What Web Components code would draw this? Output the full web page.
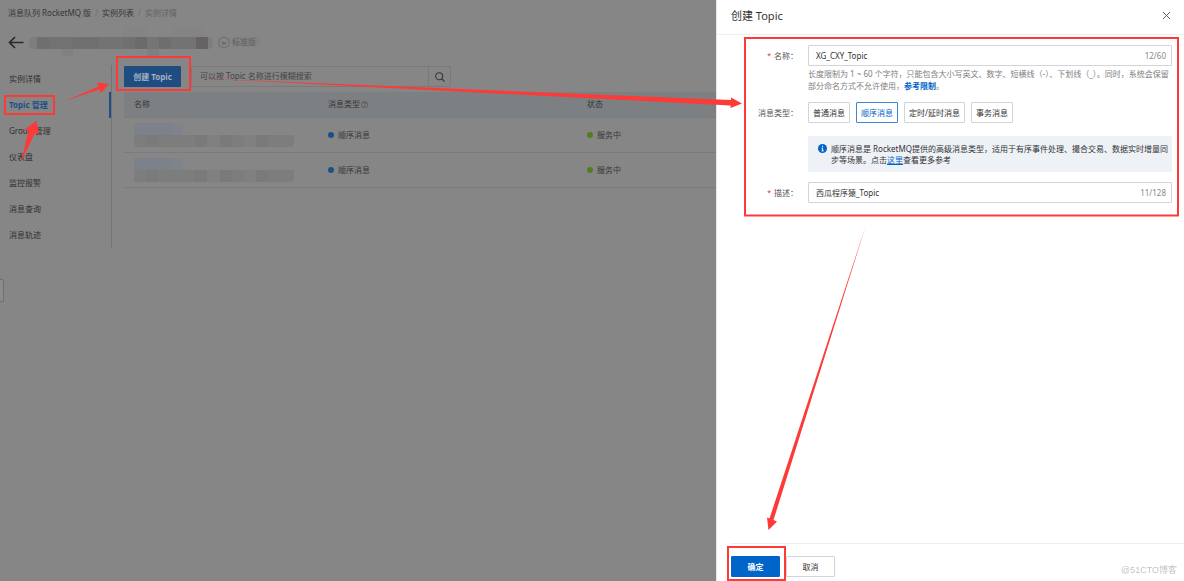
<!DOCTYPE html>
<html lang="zh-CN">
<head>
<meta charset="utf-8">
<title>创建 Topic</title>
<style>
html, body { margin: 0; height: 100%; }
body {
  --page: #868686; --line: #7b7b7b; --accent: #1f4f88;
  --blue: #0064c8; --text: #333;
  background: var(--page); color: #363636; overflow: hidden;
  font: 8px/12px "Noto Sans", "Noto Sans CJK SC", sans-serif;
}
</style>
</head>
<body>
<mq-console></mq-console>
<topic-drawer heading="创建 Topic"></topic-drawer>
<guide-marks></guide-marks>

<script>
const define = (name, html, setup) => {
  const template = document.createElement('template');
  template.innerHTML = html;
  customElements.define(name, class extends HTMLElement {
    constructor() {
      super();
      this.attachShadow({ mode: 'open' }).append(template.content.cloneNode(true));
    }
    connectedCallback() { if (setup) setup(this, this.shadowRoot); }
  });
};

define('crumb-trail', `
<style>
:host { display: block; }
nav { display: flex; gap: 4px; }
a { color: inherit; text-decoration: none; }
i { font-style: normal; color: #6e6e6e; }
span { color: #636363; }
</style>
<nav aria-label="breadcrumb"><a href="#">消息队列 RocketMQ 版</a><i>/</i><a href="#">实例列表</a><i>/</i><span>实例详情</span></nav>`);

define('instance-title', `
<style>
:host { display: flex; align-items: center; gap: 5px; height: 32px; }
button { border: 0; padding: 0; background: none; width: 16px; height: 16px; color: #2a2a2a; }
svg { display: block; }
.edition { display: flex; align-items: center; gap: 1px; color: #606060; }
.edition b { font-weight: 400; background: #828282; border-radius: 5px; padding: 0 4px 0 1px; line-height: 10px; }
</style>
<button aria-label="返回"><svg width="16" height="16" viewBox="0 0 16 16" fill="none" stroke="currentColor" stroke-width="1.7"><path d="M15.500 8.500H1.500M7 3 1.500 8.500 7 14"/></svg></button>
<svg class="mask" width="184" height="32" viewBox="0 0 184 32" aria-hidden="true">
<rect x="94" y="0" width="24" height="11" fill="#848484"/><rect x="142" y="0" width="34" height="11" fill="#848484"/>
<rect x="32" y="22" width="12" height="8" fill="#818181"/><rect x="118" y="22" width="12" height="8" fill="#7f7f7f"/>
<rect x="0" y="11" width="184" height="12" rx="5" fill="#7d7d7d"/>
<rect x="8" y="11" width="12" height="12" fill="#6f6f6f"/><rect x="20" y="11" width="24" height="12" fill="#727272"/>
<rect x="44" y="11" width="26" height="12" fill="#707070"/><rect x="70" y="11" width="24" height="12" fill="#737373"/>
<rect x="94" y="11" width="12" height="12" fill="#707070"/><rect x="106" y="11" width="12" height="12" fill="#6b6b6b"/>
<rect x="118" y="11" width="12" height="12" fill="#757575"/><rect x="130" y="11" width="12" height="12" fill="#6e6e6e"/>
<rect x="142" y="11" width="25" height="12" fill="#737373"/><rect x="167" y="11" width="12" height="12" fill="#676365"/>
</svg>
<div class="edition"><svg width="12" height="13" viewBox="0 0 12 13" fill="none" stroke="#6c6c6c"><path d="M6 .8 11 3.5v6L6 12.2 1 9.500v-6z"/><path d="M4 4.500v3L6 9l2-1.500v-2L6 7z" fill="#666" stroke="none"/></svg><b>标准版</b></div>`);

define('side-nav', `
<style>
:host { display: block; border-right: 1px solid #737373; padding-top: 1px; }
ul { list-style: none; margin: 0; padding: 0; }
a { display: block; line-height: 26px; padding-left: 9px; color: #303030; text-decoration: none; }
a[aria-current] { color: var(--accent); font-weight: 700; border-right: 2px solid var(--accent); }
</style>
<nav><ul>
<li><a href="#">实例详情</a></li>
<li><a href="#" aria-current="page">Topic 管理</a></li>
<li><a href="#">Group 管理</a></li>
<li><a href="#">仪表盘</a></li>
<li><a href="#">监控报警</a></li>
<li><a href="#">消息查询</a></li>
<li><a href="#">消息轨迹</a></li>
</ul></nav>`);

define('topic-toolbar', `
<style>
:host { display: flex; gap: 10px; height: 21px; }
button, input { font: inherit; margin: 0; box-sizing: border-box; }
.create { width: 57px; border: 0; border-radius: 1px; background: #1f4d82; color: #a4b0be; font-weight: 700; padding: 0; }
form { display: flex; }
input { width: 238px; border: 1px solid #7a7a7a; background: none; padding: 0 8px 2px; color: #404040; outline: 0; }
input::placeholder { color: #454545; opacity: 1; }
.go { width: 22px; border: 1px solid #7a7a7a; border-left: 0; background: none; padding: 0; display: grid; place-items: center; }
</style>
<button class="create">创建 Topic</button>
<form role="search"><input aria-label="搜索 Topic" placeholder="可以按 Topic 名称进行模糊搜索"><button class="go" type="button" aria-label="搜索"><svg width="10" height="10" viewBox="0 0 10 10" fill="none" stroke="#383838" stroke-width="1.100"><circle cx="4.200" cy="4.200" r="3.500"/><path d="m6.800 6.800 2.700 2.700"/></svg></button></form>`);

define('status-dot', `
<style>
:host { display: flex; align-items: center; gap: 4px; }
:host::before { content: ""; width: 6px; height: 6px; border-radius: 50%; background: var(--dot); }
</style><slot></slot>`);

define('masked-name', `
<style>:host, svg { display: block; }</style>
<svg width="160" height="24" viewBox="0 0 160 24" aria-hidden="true">
<rect width="49" height="12" fill="#7d8189"/><rect x="37" width="12" height="12" fill="#7f838a"/>
<path d="M0 12h160v8q0 4-5 4H0z" fill="#7d7d7d"/>
<path d="M12 12h12v12H12zM61 12h12v12H61zM86 12h12v12H86zM122 12h12v12h-12z" fill="#7a7a7a"/>
<path d="M73 12h13v12H73zM110 12h12v12h-12z" fill="#808080"/>
</svg>`);

define('topic-table', `
<style>
:host { display: block; }
table { width: 100%; border-collapse: collapse; table-layout: fixed; }
th, td { padding: 0 10px; text-align: left; font-weight: 400; border-bottom: 1px solid var(--line); box-sizing: border-box; }
th { background: #7d8083; height: 25px; }
td { height: 35px; }
col.name { width: 194px; } col.kind { width: 259px; }
th span { display: flex; align-items: center; gap: 1px; }
</style>
<table>
<colgroup><col class="name"><col class="kind"><col></colgroup>
<thead><tr><th>名称</th><th><span>消息类型<svg width="7" height="7" viewBox="0 0 7 7" fill="none" stroke="#484848" stroke-width=".6"><circle cx="3.500" cy="3.500" r="3.100"/><path d="M2.400 2.800q0-1.200 1.100-1.200t1.100 1q0 .6-1.100 1.200v.5M3.500 4.800v.7"/></svg></span></th><th>状态</th></tr></thead>
<tbody>
<tr><td><masked-name></masked-name></td><td><status-dot style="--dot:#1b5187">顺序消息</status-dot></td><td><status-dot style="--dot:#527d26">服务中</status-dot></td></tr>
<tr><td><masked-name></masked-name></td><td><status-dot style="--dot:#1b5187">顺序消息</status-dot></td><td><status-dot style="--dot:#527d26">服务中</status-dot></td></tr>
</tbody>
</table>`);

define('mq-console', `
<style>
:host { display: block; position: relative; height: 100%; }
header { padding: 7px 8px 0; }
instance-title { margin: 7px 0 0; }
.body { display: grid; grid-template-columns: 112px minmax(0, 1fr); align-items: start; padding: 7px 0 0; }
section { padding: 1px 8px 0 12px; display: grid; gap: 5px; }
.handle { position: absolute; left: -1px; top: 279px; width: 5px; height: 23px; box-sizing: border-box; border: 1px solid #707070; border-radius: 0 2px 2px 0; background: #8b8b8b; padding: 0; }
</style>
<header><crumb-trail></crumb-trail><instance-title></instance-title></header>
<div class="body"><side-nav></side-nav><section><topic-toolbar></topic-toolbar><topic-table></topic-table></section></div>
<button class="handle" aria-label="展开侧栏"></button>`);

define('form-row', `
<style>
:host { display: grid; grid-template-columns: 81px minmax(0, 1fr); column-gap: 10px; align-items: start; }
.label { display: flex; justify-content: flex-end; gap: 3px; line-height: 21px; color: #555; }
:host([required]) .label::before { content: "*"; color: #d93026; font-size: 7px; }
</style>
<div class="label"><slot name="label"></slot></div><div><slot></slot></div>`);

define('counted-field', `
<style>
:host { display: flex; align-items: center; height: 21px; box-sizing: border-box; border: 1px solid #cfd4dd; border-radius: 1px; padding: 0 5px 0 7px; background: #fff; }
span { color: #888; }
::slotted(input) { flex: 1; min-width: 0; border: 0; outline: 0; padding: 0; margin: 0; font: inherit; color: #333; background: none; }
</style><slot></slot><span></span>`, (el, root) => {
  root.querySelector('span').textContent = el.getAttribute('count');
});

define('info-note', `
<style>
:host { display: grid; grid-template-columns: 9px minmax(0, 1fr); gap: 4px; background: #eef2f7; padding: 7px 2px 7px 10px; line-height: 11px; color: #333; border-radius: 1px; }
svg { margin-top: 1px; }
p { margin: 0; }
</style>
<svg width="9" height="9" viewBox="0 0 9 9"><circle cx="4.500" cy="4.500" r="4.500" fill="#0064c8"/><path d="M4.500 1.700v1.200M3.600 4h1v2.700M3.500 6.900h2.200" stroke="#fff" fill="none"/></svg>
<p><slot></slot></p>`);

define('topic-drawer', `
<style>
:host { position: fixed; inset: 0 0 0 auto; width: 468px; box-sizing: border-box; background: #fff; color: var(--text); display: flex; flex-direction: column; border-left: 1px solid #e6e6e6; }
header { display: flex; align-items: center; justify-content: space-between; height: 35px; box-sizing: border-box; padding: 0 13px 3px 14px; border-bottom: 1px solid #eee; }
h2 { margin: 0; font-size: 11px; line-height: 16px; font-weight: 400; }
button { font: inherit; margin: 0; padding: 0; box-sizing: border-box; height: 21px; border: 1px solid #cfd4dd; border-radius: 1px; background: #fff; color: #333; }
.close { border: 0; width: 9px; height: 9px; }
.close svg { display: block; }
a { color: var(--blue); text-decoration: none; }
form { flex: 1; padding: 10px 12px 0 0; }
.help { margin: 2px 0 10px; color: #808080; line-height: 12px; }
.help a { font-weight: 700; }
.kinds { display: flex; gap: 6px; }
.kinds button { padding: 0 4px; }
.kinds [aria-pressed=true] { border-color: #3b87d8; color: var(--blue); }
info-note { margin: 13px 0 10px; }
footer { margin-left: 14px; border-top: 1px solid #eee; padding: 12px 0 4px; display: flex; gap: 6px; }
footer button { width: 49px; }
.ok { background: var(--blue); border-color: var(--blue); color: #fff; font-weight: 700; }
</style>
<header><h2></h2><button class="close" aria-label="关闭"><svg width="9" height="9" viewBox="0 0 9 9" stroke="#555" stroke-width=".9"><path d="m1 1 7 7M8 1 1 8"/></svg></button></header>
<form id="topic">
<form-row required><label slot="label" for="name">名称：</label>
<counted-field count="12/60"><input id="name" value="XG_CXY_Topic"></counted-field>
<p class="help">长度限制为 1 ~ 60 个字符，只能包含大小写英文、数字、短横线（-）、下划线（_）。同时，系统会保留部分命名方式不允许使用，<a href="#">参考限制</a>。</p></form-row>
<form-row><span slot="label" id="kind">消息类型：</span>
<div class="kinds" role="group" aria-labelledby="kind"><button type="button">普通消息</button><button type="button" aria-pressed="true">顺序消息</button><button type="button">定时/延时消息</button><button type="button">事务消息</button></div>
<info-note>顺序消息是 RocketMQ提供的高级消息类型，适用于有序事件处理、撮合交易、数据实时增量同步等场景。点击<a href="#" style="text-decoration:underline">这里</a>查看更多参考</info-note></form-row>
<form-row required><label slot="label" for="desc">描述：</label>
<counted-field count="11/128"><input id="desc" value="西瓜程序猿_Topic"></counted-field></form-row>
</form>
<footer><button class="ok" type="submit" form="topic">确定</button><button type="button">取消</button></footer>`, (el, root) => {
  root.querySelector('h2').textContent = el.getAttribute('heading');
});

define('guide-marks', `
<style>
:host { position: absolute; left: 0; top: 0; pointer-events: none; }
svg { display: block; }
text { font: 9px "Liberation Sans", "Noto Sans CJK SC", sans-serif; fill: #c4c4c4; }
</style>
<svg width="1184" height="581" viewBox="0 0 1184 581">
<g fill="none" stroke="#fc3a38" stroke-width="2"><path d="M5 96h49v18H5zM117 57h73v33h-73zM745 38h433v177.500H745zM728 547h57v33h-57z"/></g>
<g fill="#fc3a38">
<path d="M21 162 28.500 130.500 24.500 129.500 36.500 121 39 134.500 35 133z"/>
<path d="M65 101 98.500 86.500 97 82.500 109 84 101 93 99.500 89.500z"/>
<path d="M203 78.500 731 100V97.500L742 103.500 730.500 108V105.500z"/>
<path d="M866 225 773.500 520 777 521.500 768.500 530 767 517.500 769.500 518.500z"/>
</g>
<text x="1121" y="573">@51CTO博客</text>
</svg>`);
</script>
</body>
</html>
